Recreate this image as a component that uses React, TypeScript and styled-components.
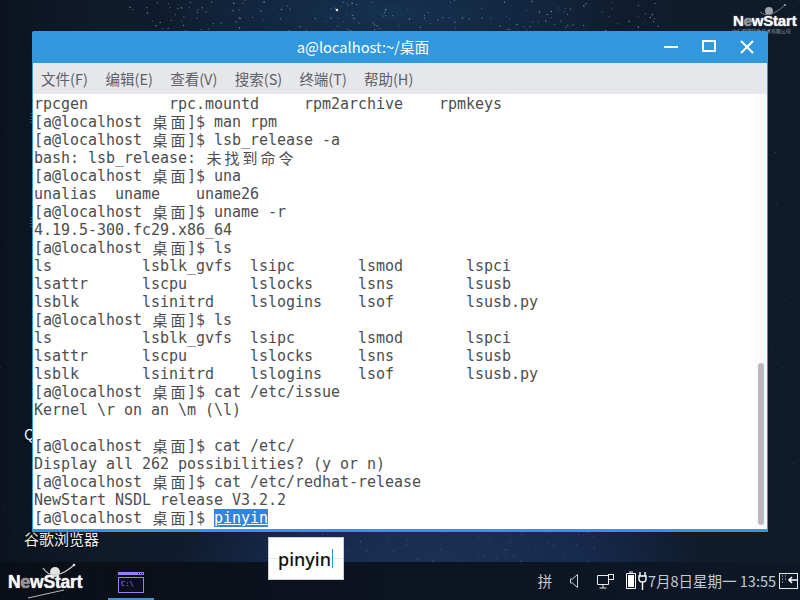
import React from "react";
import styled, { createGlobalStyle } from "styled-components";

const Global = createGlobalStyle`
  html, body { margin: 0; padding: 0; width: 800px; height: 600px; overflow: hidden; background: #0e1a2a; }
  * { box-sizing: border-box; }
`;

const CJK = `"Noto Sans CJK SC", "Noto Sans", sans-serif`;
const MONO = `"DejaVu Sans Mono", "Noto Sans CJK SC", monospace`;

const Desktop = styled.div`
  position: relative;
  width: 800px;
  height: 600px;
  overflow: hidden;
  display: flex;
  flex-direction: column;
  justify-content: flex-end;
  background:
    radial-gradient(230px 60px at 390px 12px, #16324f 0%, #122841 55%, transparent 100%),
    radial-gradient(260px 70px at 440px 555px, #1a3154 0%, #16294a 60%, transparent 100%),
    linear-gradient(90deg, #0c131f 0%, #0f1a2a 12%, #112036 50%, #101c2d 80%, #0f1a28 100%);
`;

const Stars = styled.svg`
  position: absolute;
  left: 0;
  top: 0;
`;

const DeskLabel = styled.span<{ $x: number; $y: number }>`
  position: absolute;
  left: ${p => p.$x}px;
  top: ${p => p.$y}px;
  color: #f2f2f2;
  font: 15px/20px ${CJK};
  text-shadow: 0 1px 2px #000;
  white-space: nowrap;
`;

const CornerLogo = styled.div`
  position: absolute;
  left: 732px;
  top: 3px;
  width: 62px;
  height: 28px;
`;

const LogoText = styled.span<{ $size: number; $bottom: number; $left: number }>`
  position: absolute;
  left: ${p => p.$left}px;
  bottom: ${p => p.$bottom}px;
  font: 700 ${p => p.$size}px/1 "Liberation Sans", sans-serif;
  letter-spacing: -0.2px;
  color: #f4f4f4;
  white-space: nowrap;
  text-shadow: 0 0 1px #fff;
`;

const LogoFade = styled.span`
  color: #8d8d8d;
`;

const LogoTag = styled.span`
  position: absolute;
  left: 0;
  bottom: -3px;
  font: 4.900px/1 ${CJK};
  color: #9aa0a8;
  white-space: nowrap;
`;

const LogoArt = styled.svg`
  position: absolute;
  left: 0;
  top: 0;
`;

const Win = styled.section`
  position: absolute;
  left: 32px;
  top: 31px;
  width: 736px;
  height: 501px;
  display: flex;
  flex-direction: column;
  background: #3197df;
  border-radius: 2px 2px 0 0;
  border: solid #3197df;
  border-width: 0 1px 3px 1px;
`;

const TitleBar = styled.header`
  position: relative;
  height: 32px;
  flex: none;
  display: flex;
  align-items: center;
  justify-content: center;
  padding-right: 74px;
  color: #fff;
  font: 14.700px/20px ${CJK};
`;

const WinButtons = styled.div`
  position: absolute;
  right: 13px;
  top: 9px;
  display: flex;
  gap: 24px;
`;

const MenuBar = styled.nav`
  height: 31px;
  flex: none;
  display: flex;
  align-items: center;
  gap: 16px;
  padding: 0 0 0 8px;
  background: #e6e7ea;
  color: #5c6068;
  font: 14.500px/20px ${CJK};
`;

const MenuItem = styled.span`
  white-space: nowrap;
  width: 48.600px;
`;

const Term = styled.div`
  position: relative;
  flex: 1;
  min-height: 0;
  background: #fff;
  padding: 1px 0 0 1px;
  font: 15px/18px ${MONO};
  letter-spacing: -0.03px;
  color: #4d4d4f;
  overflow: hidden;
`;

const ScrollTrack = styled.div`
  position: absolute;
  right: 0;
  top: 0;
  bottom: 0;
  width: 12px;
  background: #fbfbfb;
`;

const ScrollThumb = styled.div`
  position: absolute;
  right: 3px;
  top: 269px;
  width: 6px;
  height: 162px;
  border-radius: 3px;
  background: #b9b9be;
`;

const Line = styled.div`
  height: 18px;
  white-space: pre;
`;

const Wide = styled.span`
  display: inline-block;
  width: 18px;
  text-align: center;
  font-family: ${CJK};
  font-size: 15px;
  line-height: 18px;
  letter-spacing: 0;
  vertical-align: top;
`;

const Selected = styled.span`
  background: #3584d8;
  color: #fff;
  text-decoration: underline;
`;

const ImePopup = styled.div`
  position: absolute;
  z-index: 2;
  left: 268px;
  top: 537px;
  width: 76px;
  height: 43px;
  display: flex;
  align-items: center;
  padding-left: 9px;
  background: linear-gradient(#fff 0 20px, #e8e8e8 20px 21px, #fff 21px);
  border: 1px solid #c8d0d9;
  color: #111;
  font: 500 18px/24px "Noto Sans", sans-serif;
`;

const Caret = styled.span`
  display: inline-block;
  width: 1px;
  height: 19px;
  margin-left: 1px;
  background: #2f8fe0;
`;

const Taskbar = styled.footer`
  position: relative;
  height: 38px;
  flex: none;
  display: flex;
  align-items: stretch;
  background: linear-gradient(90deg, #0a0e16, #0c1420 50%, #0d1726);
  color: #b8c0cc;
`;

const StartButton = styled.div`
  position: relative;
  width: 108px;
  flex: none;
`;

const TaskItem = styled.div`
  width: 46px;
  flex: none;
  display: flex;
  align-items: flex-start;
  justify-content: center;
  padding-top: 10px;
  background: #0a0f18;
  border-bottom: 2px solid #4a90d9;
`;

const Tray = styled.div`
  margin-left: auto;
  display: flex;
  align-items: center;
  height: 100%;
  padding-right: 2px;
`;

const TrayText = styled.span<{ $w: number }>`
  width: ${p => p.$w}px;
  flex: none;
  font: 14.500px/20px ${CJK};
  color: #c4cad3;
  white-space: nowrap;
  text-align: center;
`;

const TrayIcon = styled.svg<{ $ml?: number }>`
  flex: none;
  margin-left: ${p => p.$ml ?? 0}px;
`;

const Prompt = () => (
  <>
    [a@localhost <Wide>桌</Wide>
    <Wide>面</Wide>]$ {""}
  </>
);

const plain = (s: string) => <Line>{s}</Line>;
const cmd = (s: string) => (
  <Line>
    <Prompt />
    {s}
  </Line>
);

// Deterministic star field: dense in the galaxy band above and below the window.
const stars: { x: number; y: number; o: number; r: number }[] = [];
let seed = 17;
const rnd = () => {
  seed = (seed * 16807) % 2147483647;
  return seed / 2147483647;
};
for (let i = 0; i < 170; i++) {
  stars.push({ x: 130 + rnd() * 530, y: rnd() * 31, o: 0.25 + rnd() * 0.45, r: 0.5 + rnd() * 0.3 });
}
for (let i = 0; i < 70; i++) {
  stars.push({ x: 300 + rnd() * 300, y: 532 + rnd() * 30, o: 0.15 + rnd() * 0.3, r: 0.5 });
}
for (let i = 0; i < 40; i++) {
  stars.push({ x: rnd() > 0.5 ? rnd() * 30 : 770 + rnd() * 30, y: rnd() * 560, o: 0.1 + rnd() * 0.2, r: 0.5 });
}

export default function App() {
  return (
    <Desktop>
      <Global />
      <Stars width="800" height="562" viewBox="0 0 800 562">
        {stars.map((s, i) => (
          <circle key={i} cx={s.x} cy={s.y} r={s.r} fill="#a9c6e6" opacity={s.o} />
        ))}
        <circle cx="337" cy="10" r="1.300" fill="#fff" opacity="0.85" />
        <path d="M31 113v12M31 217v11" stroke="#aeb4bc" strokeDasharray="1 2" opacity="0.7" />
      </Stars>
      <DeskLabel $x={24} $y={424}>Q</DeskLabel>
      <DeskLabel $x={24} $y={529}>谷歌浏览器</DeskLabel>
      <CornerLogo>
        <LogoArt width="62" height="28" viewBox="0 0 62 28">
          <circle cx="37" cy="8" r="4" fill="#a2a5aa" />
          <path d="M28 9 C34 14 42 12 53 2" stroke="#777c84" strokeWidth="1" fill="none" />
          <circle cx="53" cy="2" r="1" fill="#a2a5aa" />
        </LogoArt>
        <LogoText $size={15} $bottom={3} $left={1}>
          N<LogoFade>e</LogoFade>wStart
        </LogoText>
        <LogoTag>中标麒麟软件技术有限公司</LogoTag>
      </CornerLogo>

      <Win>
        <TitleBar>
          a@localhost:~/桌面
          <WinButtons>
            <svg width="14" height="14" viewBox="0 0 14 14">
              <path d="M0 7h14" stroke="#fff" strokeWidth="2" />
            </svg>
            <svg width="14" height="14" viewBox="0 0 14 14">
              <rect x="1" y="1" width="12" height="10" fill="none" stroke="#fff" strokeWidth="2" />
            </svg>
            <svg width="14" height="14" viewBox="0 0 14 14">
              <path d="M1 1l12 12M13 1L1 13" stroke="#fff" strokeWidth="2" />
            </svg>
          </WinButtons>
        </TitleBar>
        <MenuBar>
          <MenuItem>文件(F)</MenuItem>
          <MenuItem>编辑(E)</MenuItem>
          <MenuItem>查看(V)</MenuItem>
          <MenuItem>搜索(S)</MenuItem>
          <MenuItem>终端(T)</MenuItem>
          <MenuItem>帮助(H)</MenuItem>
        </MenuBar>
        <Term>
          <ScrollTrack>
            <ScrollThumb />
          </ScrollTrack>
          {plain("rpcgen         rpc.mountd     rpm2archive    rpmkeys")}
          {cmd("man rpm")}
          {cmd("lsb_release -a")}
          <Line>
            bash: lsb_release: <Wide>未</Wide>
            <Wide>找</Wide>
            <Wide>到</Wide>
            <Wide>命</Wide>
            <Wide>令</Wide>
          </Line>
          {cmd("una")}
          {plain("unalias  uname    uname26")}
          {cmd("uname -r")}
          {plain("4.19.5-300.fc29.x86_64")}
          {cmd("ls")}
          {plain("ls          lsblk_gvfs  lsipc       lsmod       lspci")}
          {plain("lsattr      lscpu       lslocks     lsns        lsusb")}
          {plain("lsblk       lsinitrd    lslogins    lsof        lsusb.py")}
          {cmd("ls")}
          {plain("ls          lsblk_gvfs  lsipc       lsmod       lspci")}
          {plain("lsattr      lscpu       lslocks     lsns        lsusb")}
          {plain("lsblk       lsinitrd    lslogins    lsof        lsusb.py")}
          {cmd("cat /etc/issue")}
          {plain("Kernel \\r on an \\m (\\l)")}
          {plain(" ")}
          {cmd("cat /etc/")}
          {plain("Display all 262 possibilities? (y or n)")}
          {cmd("cat /etc/redhat-release")}
          {plain("NewStart NSDL release V3.2.2")}
          <Line>
            <Prompt />
            <Selected>pinyin</Selected>
          </Line>
        </Term>
      </Win>

      <Taskbar>
        <StartButton>
          <LogoArt width="108" height="38" viewBox="0 0 108 38">
            <circle cx="55" cy="10" r="5" fill="#e2e2e2" />
            <path d="M43 6 C50 17 62 14 74 3" stroke="#c8c8c8" strokeWidth="1.200" fill="none" />
            <circle cx="74" cy="3" r="1.300" fill="#ddd" />
            <path d="M28 36 L64 28" stroke="#b9b9b9" strokeWidth="1" />
          </LogoArt>
          <LogoText $size={17.500} $bottom={9} $left={8}>
            N<LogoFade>e</LogoFade>wStart
          </LogoText>
        </StartButton>
        <TaskItem>
          <svg width="26" height="22" viewBox="0 0 26 22">
            <rect x="0" y="0" width="26" height="3" fill="#9a80ee" />
            <path d="M20 1.500h1M22 1.500h1M24 1.500h1" stroke="#0a0f18" />
            <rect x="0.500" y="5.500" width="25" height="15" fill="none" stroke="#9a80ee" />
            <text x="3" y="14" fontFamily="DejaVu Sans Mono" fontSize="7" fill="#9a80ee">C:\</text>
          </svg>
        </TaskItem>
        <Tray>
          <TrayText $w={16}>拼</TrayText>
          <TrayIcon $ml={17} width="9" height="14" viewBox="0 0 9 14">
            <path d="M.5 5h2l5-4.500v13l-5-4.500h-2z" fill="none" stroke="#d0d4da" />
          </TrayIcon>
          <TrayIcon $ml={18} width="17" height="15" viewBox="0 0 17 15">
            <path d="M.5 1.500h11v9H.5zM6 10.500V14M2.500 14h7" fill="none" stroke="#e8e8e8" />
            <rect x="11.500" y="0.500" width="5" height="5" fill="#0c1420" stroke="#e8e8e8" />
          </TrayIcon>
          <TrayIcon $ml={12} width="21" height="20" viewBox="0 0 21 20">
            <path d="M3 1h4M.5 2.500h9v15h-9z" fill="none" stroke="#fff" />
            <rect x="2" y="4" width="6" height="12" fill="#fff" />
            <path d="M14 1v4M19 1v4M13 5h7v3c0 2-1.500 3-3.500 3S13 10 13 8zM16.500 11v8" fill="none" stroke="#fff" strokeWidth="1.400" />
          </TrayIcon>
          <TrayText $w={130}>7月8日星期一 13:55</TrayText>
          <TrayIcon $ml={2} width="19" height="16" viewBox="0 0 19 16">
            <rect x="0.500" y="0.500" width="18" height="15" fill="none" stroke="#e8e8e8" />
            <path d="M3 3h1M6 3h1M3 6h1M6 6h1M3 9h1" stroke="#e8e8e8" />
            <path d="M18 7h-8M13 4l-3 3 3 3" fill="none" stroke="#fff" strokeWidth="1.500" />
          </TrayIcon>
        </Tray>
      </Taskbar>

      <ImePopup>
        pinyin
        <Caret />
      </ImePopup>
    </Desktop>
  );
}
